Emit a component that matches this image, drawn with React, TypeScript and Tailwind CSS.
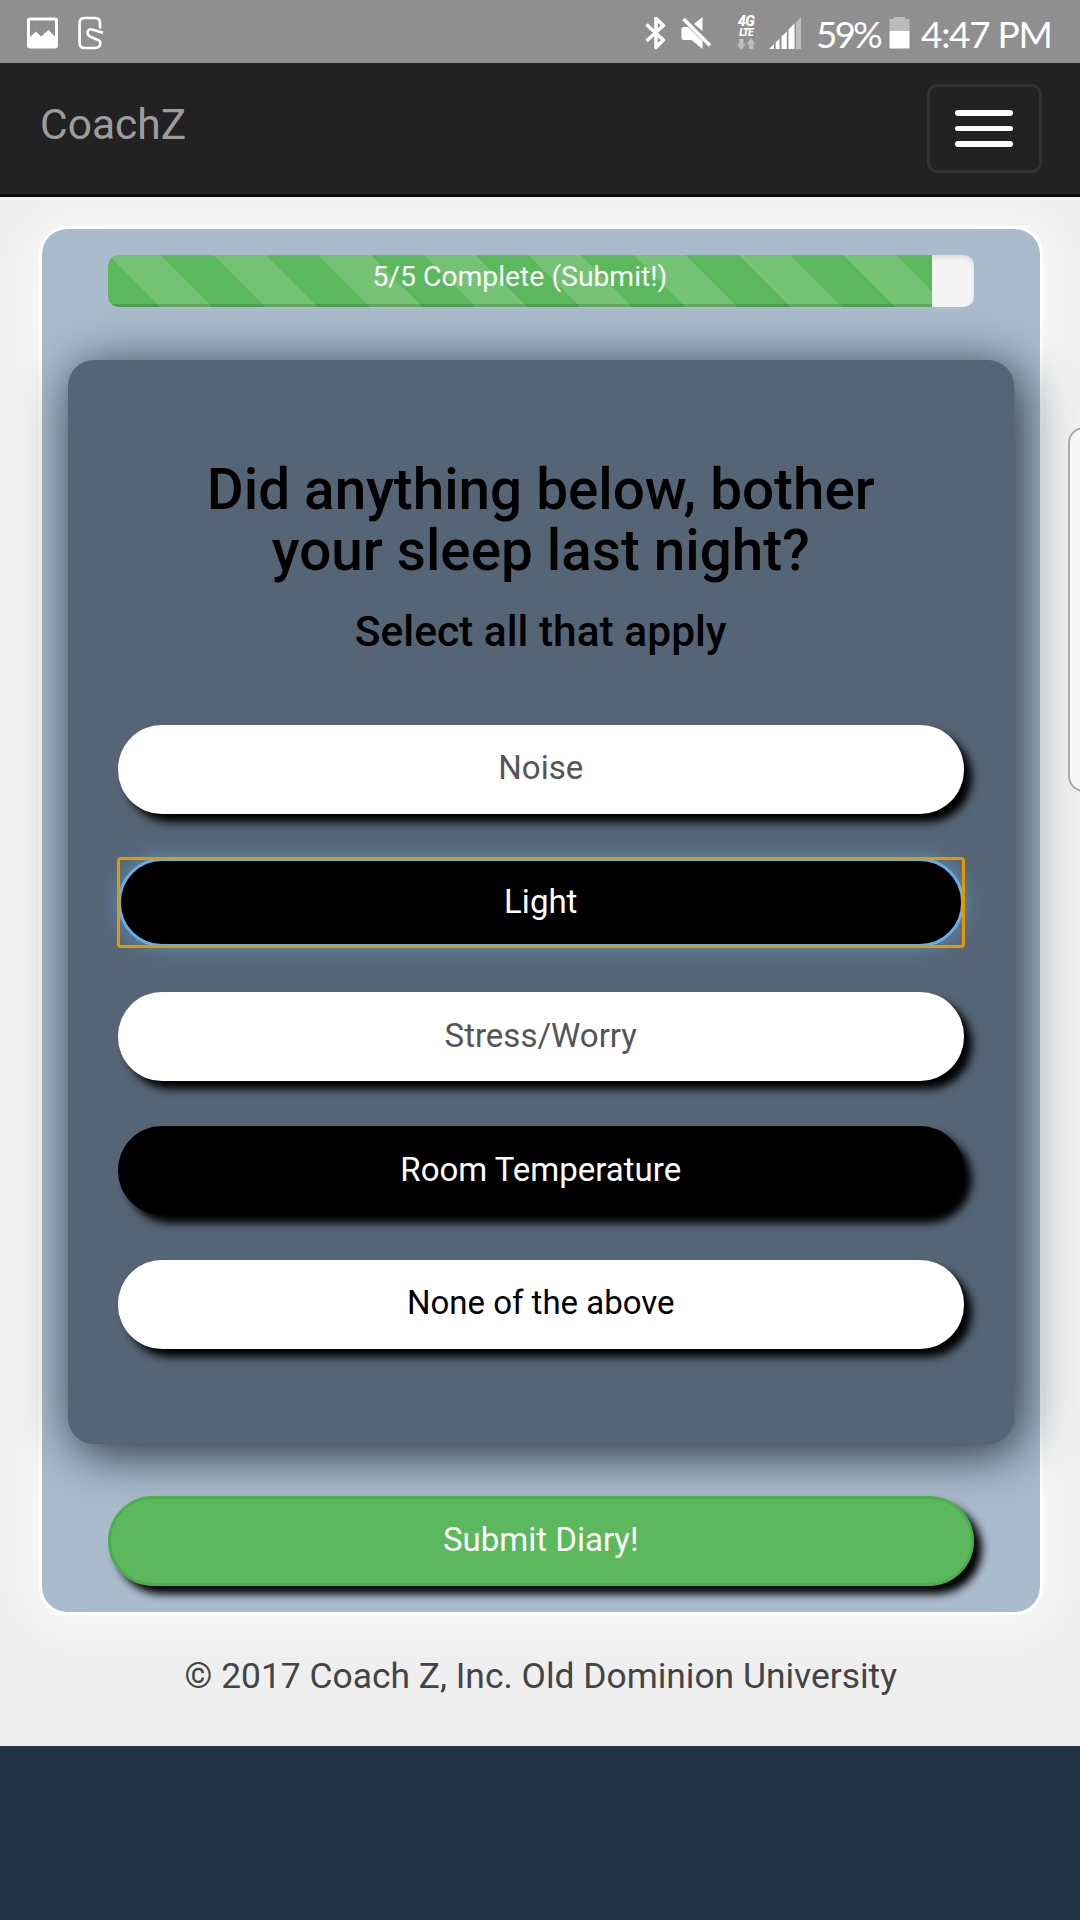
import React from "react";

function ImageIcon() {
  return (
    <svg className="ml-[27px] h-[32px] w-[31px]" viewBox="0 0 31 32">
      <rect x="1.5" y="2" width="28" height="28" rx="1.5" fill="none" stroke="#fff" strokeWidth="3" />
      <path d="M2 21L9 14.5L14 19.5L21.5 13L29 20.5V29.5H2Z" fill="#fff" />
    </svg>
  );
}

function NoteIcon() {
  return (
    <svg className="ml-[20px] h-[34px] w-[26px]" viewBox="0 0 26 34" fill="none" stroke="#fff" strokeWidth="2.6" strokeLinejoin="round">
      <path d="M22 12.500V7Q22 2 17 2H6.500Q1.600 2 1.600 7V27Q1.600 32 6.500 32H17Q22 32 22.300 27.500Q22.500 25 20 24L12 20.500Q9.200 19 9.600 15.800Q10.200 12.700 14 13.500L25 16.800" />
    </svg>
  );
}

function BluetoothIcon() {
  return (
    <svg className="h-[34px] w-[21px]" viewBox="0 0 21 34" fill="none" stroke="#fff" strokeWidth="3.600" strokeLinejoin="round">
      <path d="M1.500 8.500L18.300 24L11 31.500V2.500L18.300 9.500L1.500 25" />
    </svg>
  );
}

function MuteIcon() {
  return (
    <svg className="ml-[15px] h-[34px] w-[31px]" viewBox="0 0 31 34">
      <path d="M21.500 1V15L13 8Z" fill="#fff" />
      <path d="M0.500 13Q0.500 11 2.500 11H7L21.500 25V33L10.500 24H2.500Q0.500 24 0.500 22Z" fill="#fff" />
      <path d="M2.500 3L29 29.500" stroke="#fff" strokeWidth="3.600" />
    </svg>
  );
}

function Network() {
  return (
    <div className="ml-[23px] flex h-[34px] w-[22px] flex-col items-center pt-px font-bold italic text-white">
      <span className="text-[14.500px] font-black leading-[10px] tracking-[-0.500px]">4G</span>
      <span className="mt-px text-[10px] font-black leading-[9px] tracking-[-0.700px]">LTE</span>
      <svg className="mt-px h-[12px] w-[20px] shrink-0" viewBox="0 0 20 12" fill="#bebebe">
        <path d="M3 1H7.500V6H10L5.200 12L0.500 6H3Z" />
        <path d="M12.800 11V6H10.500L15 0L19.500 6H17.300V11Z" />
      </svg>
    </div>
  );
}

function SignalIcon() {
  return (
    <svg className="ml-[12px] h-[32px] w-[33px]" viewBox="0 0 33 32">
      <path d="M27 5.500L32 0V32H27Z" fill="#bdbdbd" />
      <path d="M0 32L5 27V32ZM6.700 25.500L10.500 21.500V32H6.700ZM12.500 19.500L17.800 14.500V32H12.500ZM19.500 12.500L25.500 6.500V32H19.500Z" fill="#fff" />
    </svg>
  );
}

function BatteryIcon() {
  return (
    <svg className="ml-[7px] h-[32px] w-[21px]" viewBox="0 0 21 32">
      <path d="M5 0H16V2H20.500V14H0.500V2H5Z" fill="#bcbcbc" />
      <path d="M0.500 14H20.500V31.500H0.500Z" fill="#fff" />
    </svg>
  );
}

function StatusBar() {
  return (
    <div className="flex h-[63px] items-center bg-[#8f8f8f] pt-[2px] text-white">
      <ImageIcon />
      <NoteIcon />
      <div className="ml-auto flex items-center pr-[29px]">
        <BluetoothIcon />
        <MuteIcon />
        <Network />
        <SignalIcon />
        <div className="ml-[14px] w-[66px] whitespace-nowrap pt-[2px] font-['Lato'] text-[37px] leading-[40px] tracking-[-3px]">59%</div>
        <BatteryIcon />
        <div className="ml-[11px] w-[130px] whitespace-nowrap pt-[2px] font-['Lato'] text-[37px] leading-[40px] tracking-[-1.300px]">4:47 PM</div>
      </div>
    </div>
  );
}

function Navbar() {
  return (
    <nav className="relative z-10 flex h-[134px] items-start justify-between border-b-[3px] border-[#080808] bg-[#222] pl-[40px] pr-[38px]">
      <a className="mt-[37px] text-[42.500px] leading-[50px] text-[#9d9d9d]">CoachZ</a>
      <button className="mt-[21px] flex h-[89px] w-[115px] flex-col items-center justify-center gap-[10px] rounded-[10px] border-[3px] border-[#333] pr-px">
        <span className="h-[5.500px] w-[58px] rounded-[3px] bg-white" />
        <span className="h-[5.500px] w-[58px] rounded-[3px] bg-white" />
        <span className="h-[5.500px] w-[58px] rounded-[3px] bg-white" />
      </button>
    </nav>
  );
}

const base = "relative flex h-[89px] w-full items-center justify-center rounded-[44px] text-[33px]";
const raised = "pb-[2px] shadow-[8px_8px_8px_#000]";

const options = [
  { label: "Noise", look: `bg-white text-[#555] ${raised}` },
  {
    label: "Light",
    look: "border-[3px] border-[#66afe9] bg-black pb-[2px] text-white shadow-[0_0_21px_rgba(102,175,233,0.6)]",
    focused: true,
  },
  { label: "Stress/Worry", look: `bg-white text-[#555] ${raised}` },
  { label: "Room Temperature", look: `bg-black text-white ${raised}` },
  { label: "None of the above", look: `bg-white text-black ${raised}` },
];

export default function App() {
  return (
    <div className="relative flex h-[1920px] w-[1080px] flex-col overflow-hidden bg-[#223343] font-['Roboto',sans-serif]">
      <StatusBar />
      <Navbar />
      <main className="h-[1549px] bg-[#efefef] pl-[39px] pr-[37.500px] pt-[28.500px]">
        <section className="h-[1389px] rounded-[28px] border-[3px] border-white bg-[#aabbcc] bg-clip-padding px-[26px] pt-[26px] shadow-[0_4px_52px_#fff]">
          <div className="mx-[40px] h-[52px] overflow-hidden rounded-[10px] bg-[#f5f5f5] shadow-[inset_0_3px_5px_rgba(0,0,0,0.1)]">
            <div className="h-full w-[95.200%] bg-[#5cb85c] bg-[linear-gradient(45deg,rgba(255,255,255,0.15)_25%,transparent_25%,transparent_50%,rgba(255,255,255,0.15)_50%,rgba(255,255,255,0.15)_75%,transparent_75%,transparent)] bg-[length:105px_105px] text-center text-[28.300px] leading-[43px] text-white shadow-[inset_0_-3px_0_rgba(0,0,0,0.15)]">
              5/5 Complete (Submit!)
            </div>
          </div>
          <div className="mt-[53px] h-[1084px] rounded-[26px] bg-[#556575] px-[50px] pt-[99px] text-center shadow-[6px_8px_52px_#1e2a36]">
            <h3 className="text-[56.600px] font-medium leading-[61px] text-black">
              Did anything below, bother
              <br />
              your sleep last night?
            </h3>
            <h4 className="mt-[27px] text-[42.500px] font-medium leading-[47px] text-black">Select all that apply</h4>
            <div className="mt-[70px] flex flex-col gap-[44.800px]">
              {options.map((o) => (
                <button key={o.label} className={`${base} ${o.look}`}>
                  {o.label}
                  {o.focused && (
                    <span className="absolute -inset-[4px] rounded-[4px] border-[3px] border-[#e59700]" />
                  )}
                </button>
              ))}
            </div>
          </div>
          <div className="mx-[40px] mt-[52.500px]">
            <button className="flex h-[90px] w-full items-center justify-center rounded-[45px] border-[3px] border-[#4cae4c] bg-[#5cb85c] pb-[2px] text-[33px] text-white shadow-[8px_8px_8px_#000]">
              Submit Diary!
            </button>
          </div>
        </section>
        <footer className="mt-[36.500px] text-center text-[35.400px] leading-[50px] text-[#444]">
          © 2017 Coach Z, Inc. Old Dominion University
        </footer>
      </main>
      <div className="absolute -right-[20px] top-[427px] h-[365px] w-[32px] rounded-[18px] border-2 border-[#aaa] bg-[#f7f7f7]" />
    </div>
  );
}
